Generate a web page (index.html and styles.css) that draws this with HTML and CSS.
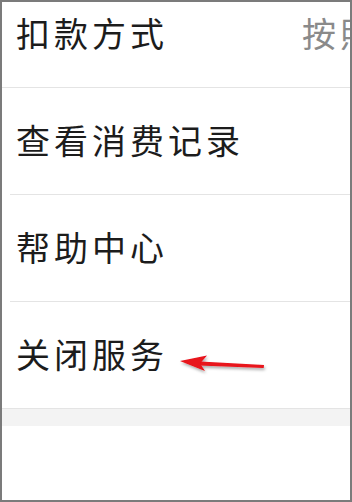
FILE: index.html
```html
<!DOCTYPE html>
<html lang="zh-CN">
<head>
    <meta charset="UTF-8">
    <meta name="viewport" content="width=device-width, initial-scale=1.0">
    <title>服务设置</title>
    <link rel="stylesheet" href="styles.css">
</head>
<body>
    <div class="frame">
        <ul class="menu">
            <li class="item first">
                <span class="label">扣款方式</span>
                <span class="value">按照顺序扣款</span>
            </li>
            <li class="item">
                <span class="label">查看消费记录</span>
            </li>
            <li class="item">
                <span class="label">帮助中心</span>
            </li>
            <li class="item last">
                <span class="label">关闭服务</span>
                <!-- 标注箭头 -->
                <svg class="arrow" width="92" height="22" viewBox="0 0 92 22">
                    <defs>
                        <filter id="shadow" x="-20%" y="-60%" width="140%" height="220%">
                            <feDropShadow dx="1" dy="2" stdDeviation="1.5" flood-color="#000" flood-opacity="0.35"/>
                        </filter>
                    </defs>
                    <g filter="url(#shadow)">
                        <path d="M22 7.5 L86 11 L85.7 14 L21.5 11.5 Z" fill="#e8121a"/>
                        <path d="M2 7 L29 1.5 L22 9.5 L27 17 Z" fill="#e8121a"/>
                    </g>
                </svg>
            </li>
        </ul>
        <div class="gap"></div>
    </div>
</body>
</html>
```

FILE: styles.css
```css
body {
    margin: 0;
    padding: 0;
    background: #fff;
    font-family: "Noto Sans CJK SC", "Noto Sans", sans-serif;
}

.frame {
    width: 352px;
    height: 502px;
    box-sizing: border-box;
    border: 2px solid #7b7b7b;
    overflow: hidden;
    background: #fff;
}

.menu {
    list-style: none;
    margin: -21px 0 0 0;
    padding: 0;
}

.item {
    height: 107px;
    display: flex;
    align-items: center;
    padding: 0 0 4px 14px;
    box-sizing: border-box;
    position: relative;
    white-space: nowrap;
    overflow: hidden;
}

.item::after {
    content: "";
    position: absolute;
    left: 8px;
    right: 0;
    bottom: 0;
    height: 1px;
    background: #e4e4e4;
}

.item.first::after,
.item.last::after {
    left: 0;
}

.label {
    font-size: 34px;
    letter-spacing: 4px;
    color: #1c1c1c;
}

.value {
    font-size: 34px;
    letter-spacing: 4px;
    color: #8a8a8a;
    margin-left: 134px;
}

.arrow {
    margin: 22px 0 0 10px;
}

.gap {
    height: 17px;
    background: #f3f3f3;
}
```
